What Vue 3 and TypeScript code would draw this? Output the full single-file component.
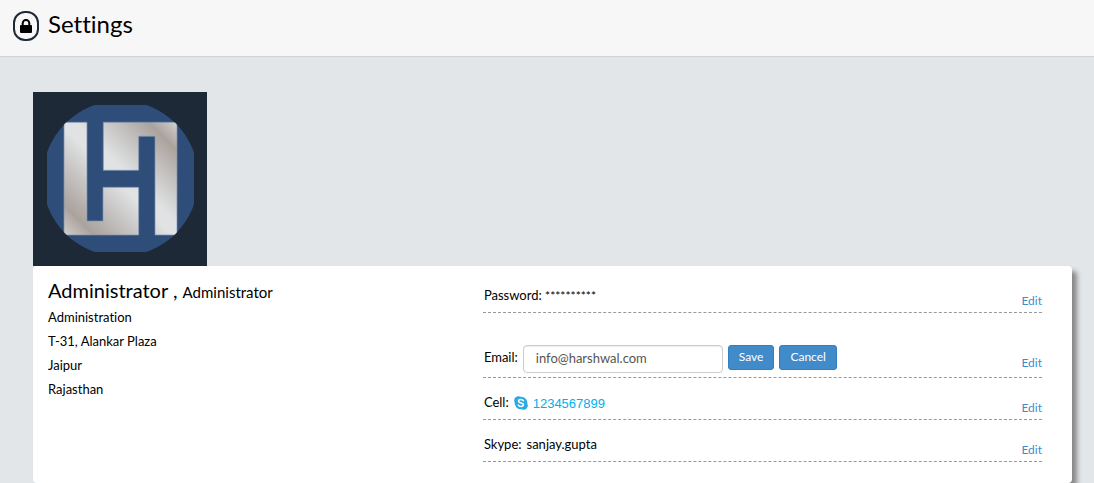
<script setup lang="ts">
import { ref } from 'vue'

const email = ref<string>('info@harshwal.com')
const address: string[] = ['Administration', 'T-31, Alankar Plaza', 'Jaipur', 'Rajasthan']
</script>

<template>
  <div class="page">
    <header class="topbar">
      <span class="lock-badge">
        <svg viewBox="0 0 12 14" width="12" height="14" aria-hidden="true">
          <path d="M1 6h10q1 0 1 1v6q0 1-1 1H1q-1 0-1-1V7q0-1 1-1z" />
          <path d="M2.700 7V4.200a3.300 3.300 0 0 1 6.600 0V7" fill="none" stroke="#000" stroke-width="2" />
        </svg>
      </span>
      <h1>Settings</h1>
    </header>

    <main class="content">
      <svg class="logo" viewBox="0 0 174 174" role="img" aria-label="Company logo">
        <defs>
          <linearGradient id="silver" gradientUnits="userSpaceOnUse" x1="34" y1="140" x2="144" y2="30">
            <stop offset="0" stop-color="#cbc6c3" />
            <stop offset="0.11" stop-color="#aaa29d" />
            <stop offset="0.27" stop-color="#c2bfbd" />
            <stop offset="0.46" stop-color="#e0e2e4" />
            <stop offset="0.54" stop-color="#e0e2e4" />
            <stop offset="0.73" stop-color="#c2bfbd" />
            <stop offset="0.87" stop-color="#aaa29d" />
            <stop offset="1" stop-color="#d4d1cf" />
          </linearGradient>
          <clipPath id="disc">
            <circle cx="87.5" cy="86.5" r="78" />
          </clipPath>
        </defs>
        <rect width="174" height="174" fill="#1e2938" />
        <g clip-path="url(#disc)">
          <rect x="14" y="13" width="147" height="147" fill="#2e4e79" />
          <g stroke="#7f93b1" stroke-width="0.7" fill="url(#silver)">
            <path d="M31 30.3H54V129H70V95.3H105.7V143H31z" />
            <path d="M70.3 30.3H144V143H122V44.3H105.7V78.3H70.3z" />
          </g>
        </g>
      </svg>

      <section class="card">
        <div class="identity">
          <h2>Administrator , <small>Administrator</small></h2>
          <p v-for="line in address" :key="line">{{ line }}</p>
        </div>

        <div class="details">
          <div class="row first">
            <span class="field">Password: <span class="mask">**********</span></span>
            <a class="edit" href="#">Edit</a>
          </div>
          <form class="row email" @submit.prevent>
            <label for="email">Email:</label>
            <input id="email" v-model="email" type="text" />
            <button type="submit">Save</button>
            <button type="button">Cancel</button>
            <a class="edit" href="#">Edit</a>
          </form>
          <div class="row">
            <span class="field">Cell:</span>
            <a class="phone" href="tel:1234567899">
              <svg viewBox="0 0 14 14" width="14" height="14" aria-hidden="true">
                <circle cx="4.4" cy="4.4" r="4.2" fill="#2aa9e2" />
                <circle cx="9.6" cy="9.6" r="4.2" fill="#2aa9e2" />
                <circle cx="7" cy="7" r="6.3" fill="#2aa9e2" />
                <path d="M9.500 4.800C9 3.800 8.100 3.500 7 3.500c-1.400 0-2.500.6-2.500 1.700 0 2.300 5 1.200 5 3.400 0 1.200-1.100 1.900-2.500 1.900-1.300 0-2.300-.5-2.700-1.500" fill="none" stroke="#fff" stroke-width="1.500" stroke-linecap="round" />
              </svg>
              <span>1234567899</span>
            </a>
            <a class="edit" href="#">Edit</a>
          </div>
          <div class="row">
            <span class="field">Skype:</span>
            <span class="field">sanjay.gupta</span>
            <a class="edit" href="#">Edit</a>
          </div>
        </div>
      </section>
    </main>
  </div>
</template>

<style>
body {
  background: #e2e6e9;
}
</style>

<style scoped>
.page {
  font-family: Lato, "Liberation Sans", sans-serif;
  font-size: 13px;
  line-height: 24px;
  font-variant-ligatures: none;
  color: #000;
}
.page * {
  box-sizing: border-box;
}
.topbar {
  display: flex;
  align-items: center;
  gap: 9px;
  height: 57px;
  padding: 0 13px 5px;
  background: #f7f7f7;
  border-bottom: 1px solid #d0d3d6;
}
.lock-badge {
  display: flex;
  align-items: center;
  justify-content: center;
  width: 26px;
  height: 30px;
  border: 2px solid #1e2938;
  border-radius: 12px;
}
h1 {
  margin: 0;
  font-size: 24px;
  line-height: 28px;
  padding-bottom: 3px;
  font-weight: 400;
}
.content {
  padding: 35px 22px 0 33px;
}
.logo {
  display: block;
  width: 174px;
  height: 174px;
}
.card {
  display: grid;
  grid-template-columns: 7fr 9fr;
  padding: 12px 30px 21px 15px;
  background: #fff;
  border-radius: 4px;
  box-shadow: 5px 5px 5px #888;
}
h2 {
  margin: 0;
  font-size: 20px;
  line-height: 25px;
  font-weight: 400;
}
h2 small {
  font-size: 15px;
}
p {
  margin: 0;
}
.row {
  display: flex;
  align-items: flex-start;
  gap: 5px;
  height: 42px;
  padding: 12px 0 0 1px;
  border-bottom: 1px dashed #999;
}
.row.first {
  height: 35px;
  padding-top: 5px;
}
.row.email {
  height: 65px;
  padding-top: 32px;
}
.mask {
  font-size: 12px;
}
.edit {
  align-self: flex-end;
  margin-left: auto;
  font-size: 12px;
  line-height: 22px;
  color: #428bca;
  text-decoration: none;
}
.row.email .edit {
  margin-bottom: 3px;
}
input {
  width: 200px;
  height: 28px;
  padding: 0 12px 2px;
  border: 1px solid #ccc;
  border-radius: 4px;
  font: 13px Lato, sans-serif;
  color: #555;
  background: #fff;
  box-shadow: inset 0 1px 1px rgba(0, 0, 0, 0.075);
}
button {
  height: 25px;
  padding: 0 10px 2px;
  border: 1px solid #357ebd;
  border-radius: 3px;
  background: #428bca;
  color: #fff;
  font: 12px Lato, sans-serif;
}
.phone {
  display: flex;
  align-items: center;
  gap: 5px;
  color: #00aff0;
  line-height: 28px;
  font-family: "Liberation Sans", sans-serif;
  text-decoration: none;
}
.phone svg {
  margin-bottom: 2px;
}
</style>
